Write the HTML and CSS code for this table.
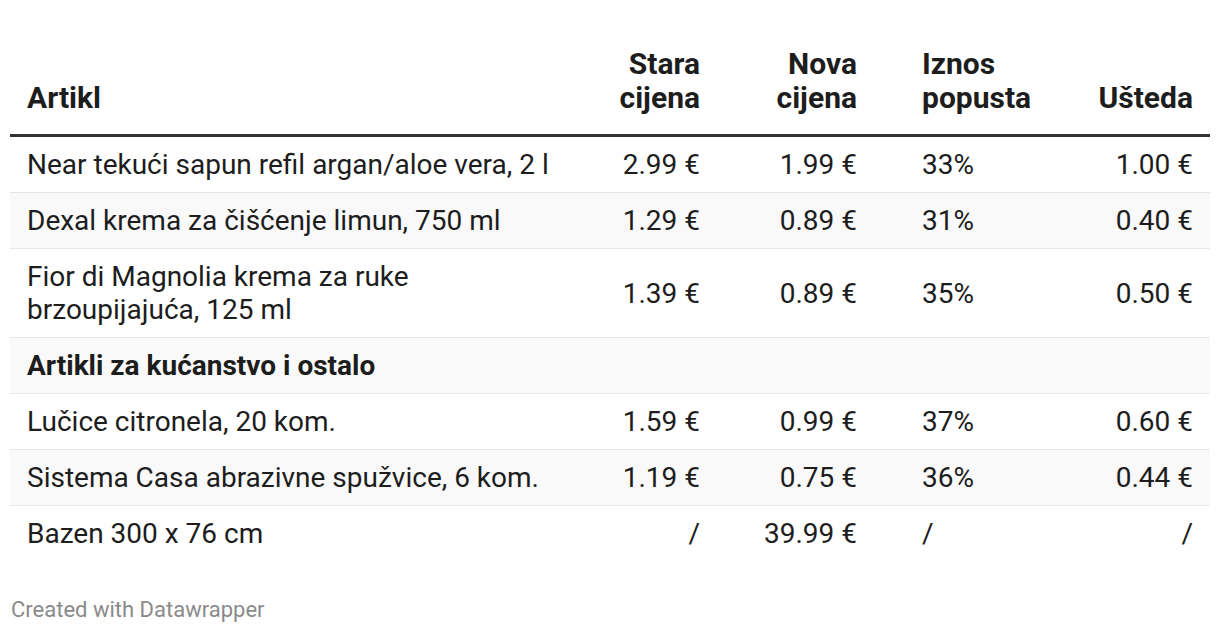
FILE: index.html
```html
<!DOCTYPE html>
<html lang="hr">
<head>
<meta charset="utf-8">
<link rel="stylesheet" href="styles.css">
</head>
<body>
<div class="chart">
  <table class="dw-table">
    <colgroup>
      <col class="c-name">
      <col class="c-old">
      <col class="c-new">
      <col class="c-pct">
      <col class="c-save">
    </colgroup>
    <thead>
      <tr>
        <th class="left">Artikl</th>
        <th class="right">Stara<br>cijena</th>
        <th class="right">Nova<br>cijena</th>
        <th class="left pct">Iznos<br>popusta</th>
        <th class="right">Ušteda</th>
      </tr>
    </thead>
    <tbody>
      <tr>
        <td>Near tekući sapun refil argan/aloe vera, 2 l</td>
        <td class="right">2.99 €</td>
        <td class="right">1.99 €</td>
        <td class="pct">33%</td>
        <td class="right">1.00 €</td>
      </tr>
      <tr class="shade">
        <td>Dexal krema za čišćenje limun, 750 ml</td>
        <td class="right">1.29 €</td>
        <td class="right">0.89 €</td>
        <td class="pct">31%</td>
        <td class="right">0.40 €</td>
      </tr>
      <tr>
        <td>Fior di Magnolia krema za ruke<br>brzoupijajuća, 125 ml</td>
        <td class="right">1.39 €</td>
        <td class="right">0.89 €</td>
        <td class="pct">35%</td>
        <td class="right">0.50 €</td>
      </tr>
      <tr class="shade group">
        <td>Artikli za kućanstvo i ostalo</td>
        <td></td>
        <td></td>
        <td></td>
        <td></td>
      </tr>
      <tr>
        <td>Lučice citronela, 20 kom.</td>
        <td class="right">1.59 €</td>
        <td class="right">0.99 €</td>
        <td class="pct">37%</td>
        <td class="right">0.60 €</td>
      </tr>
      <tr class="shade">
        <td>Sistema Casa abrazivne spužvice, 6 kom.</td>
        <td class="right">1.19 €</td>
        <td class="right">0.75 €</td>
        <td class="pct">36%</td>
        <td class="right">0.44 €</td>
      </tr>
      <tr class="last">
        <td>Bazen 300 x 76 cm</td>
        <td class="right">/</td>
        <td class="right">39.99 €</td>
        <td class="pct">/</td>
        <td class="right">/</td>
      </tr>
    </tbody>
  </table>
  <div class="footer">Created with Datawrapper</div>
</div>
</body>
</html>
```
FILE: styles.css
```css
html, body {
  margin: 0;
  padding: 0;
  background: #ffffff;
}

.chart {
  padding: 36px 10px 0 10px;
  font-family: Roboto, "Liberation Sans", Arial, sans-serif;
  color: #1d1d1d;
}

.dw-table {
  width: 1200px;
  border-collapse: collapse;
  table-layout: fixed;
  font-size: 28px;
  line-height: 33px;
}

.c-name { width: 580px; }
.c-old { width: 127px; }
.c-new { width: 157px; }
.c-pct { width: 176px; }
.c-save { width: 160px; }

.dw-table th {
  font-size: 30px;
  line-height: 34px;
  font-weight: 700;
  vertical-align: bottom;
  padding: 11px 17px 19px 17px;
  border-bottom: 3px solid #333333;
  color: #1d1d1d;
  white-space: nowrap;
}

.dw-table td {
  padding: 11px 17px 11px 17px;
  vertical-align: middle;
  border-bottom: 1px solid #e6e6e6;
  font-weight: 400;
  white-space: nowrap;
}

.dw-table tr.last td {
  border-bottom: none;
}

.left { text-align: left; }
.right { text-align: right; }

.dw-table .pct {
  text-align: left;
  padding-left: 48px;
}

.shade td {
  background: #f9f9f9;
}

.group td {
  font-weight: 700;
}

.footer {
  margin-top: 36px;
  padding-left: 1px;
  font-size: 22px;
  color: #8a8a8a;
}
```
